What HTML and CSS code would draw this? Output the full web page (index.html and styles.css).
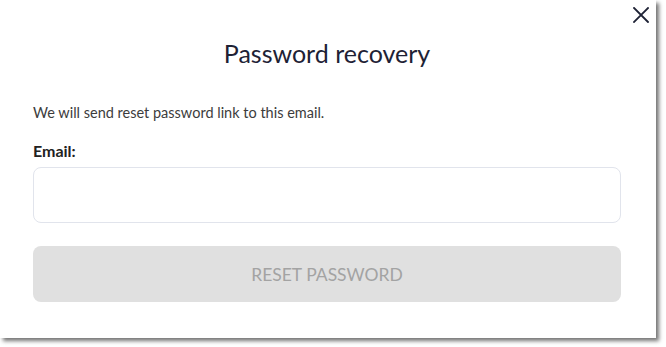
FILE: index.html
```html
<!DOCTYPE html>
<html lang="en">
<head>
<meta charset="utf-8">
<title>Password recovery</title>
<link rel="stylesheet" href="styles.css">
</head>
<body>
<div class="dialog">
  <button class="close" aria-label="Close">
    <svg width="16" height="16" viewBox="0 0 16 16"><path d="M1 1 L15 15 M15 1 L1 15" stroke="#1e2235" stroke-width="1.8" fill="none" stroke-linecap="square"/></svg>
  </button>
  <h1 class="title">Password recovery</h1>
  <p class="desc">We will send reset password link to this email.</p>
  <label class="label" for="email">Email:</label>
  <input class="input" id="email" type="email">
  <button class="submit" disabled>RESET PASSWORD</button>
</div>
</body>
</html>
```

FILE: styles.css
```css
html, body {
  margin: 0;
  padding: 0;
  background: #ffffff;
}
body {
  min-height: 347px;
  font-family: Lato, "Noto Sans", sans-serif;
}
.dialog {
  position: relative;
  box-sizing: border-box;
  width: 656px;
  height: 338px;
  padding: 38px 35px 0 33px;
  background: #fff;
  box-shadow: 3px 3px 4px rgba(0, 0, 0, 0.55);
  display: flex;
  flex-direction: column;
}
.close {
  position: absolute;
  top: 7px;
  right: 7px;
  width: 16px;
  height: 16px;
  padding: 0;
  border: 0;
  background: none;
  display: flex;
}
.title {
  margin: 0;
  text-align: center;
  font-size: 25px;
  line-height: 30px;
  font-weight: 400;
  color: #1e2235;
}
.desc {
  margin: 36px 0 0;
  font-size: 14.5px;
  line-height: 18px;
  color: #3c3c3c;
}
.label {
  margin-top: 20px;
  font-size: 16px;
  line-height: 18px;
  font-weight: 700;
  color: #222;
}
.input {
  box-sizing: border-box;
  margin: 7px 0 0;
  width: 100%;
  height: 56px;
  border: 1px solid #e1e4ec;
  border-radius: 8px;
  background: #fff;
}
.submit {
  margin-top: 23px;
  height: 56px;
  border: 0;
  border-radius: 8px;
  background: #e0e0e0;
  color: #a3a3a3;
  font-family: Lato, "Noto Sans", sans-serif;
  font-size: 17.5px;
}
```
